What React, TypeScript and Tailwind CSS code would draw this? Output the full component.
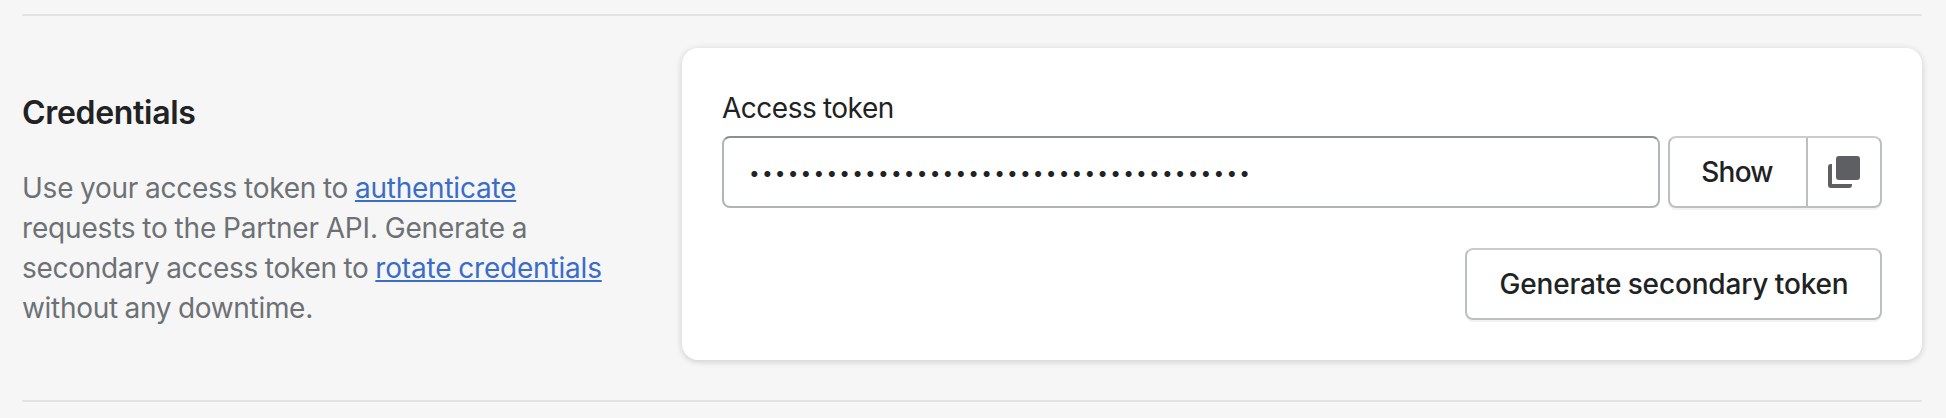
function DuplicateIcon() {
  return (
    <svg width="40" height="40" viewBox="0 0 40 40" fill="#5d5f63" aria-hidden="true">
      <rect x="12" y="4" width="24" height="24" rx="3" />
      <path d="M7 12h1v20h20v1a3 3 0 0 1-3 3H7a3 3 0 0 1-3-3V15a3 3 0 0 1 3-3z" />
    </svg>
  );
}

const token = '•'.repeat(39);

export default function App() {
  return (
    <div className="h-[418px] w-[1946px] bg-[#f6f6f6] pl-[22px] pr-6 pt-3.5 font-[Inter,sans-serif] text-[28px] leading-10 text-[#202223]">
      <section className="flex h-[388px] border-y-2 border-[#e2e3e4] pt-8">
        <div className="w-[660px] shrink-0 pt-[45px]">
          <h2 className="text-[32px] font-semibold tracking-[-0.31px]">Credentials</h2>
          <p className="mt-[35px] whitespace-nowrap text-[#6d7175] [word-spacing:-0.8px]">
            <span className="tracking-[-0.24px]">Use your access token to </span>
            <a href="#" className="tracking-[-0.23px] text-[#3a6dc9] underline decoration-2 underline-offset-2">authenticate</a>
            <br />
            <span className="tracking-[-0.18px]">requests to the Partner API. Generate a</span>
            <br />
            <span className="tracking-[-0.29px]">secondary access token to </span>
            <a href="#" className="tracking-[-0.19px] text-[#3a6dc9] underline decoration-2 underline-offset-2">rotate credentials</a>
            <br />
            <span className="tracking-[-0.31px]">without any downtime.</span>
          </p>
        </div>
        <div className="h-[312px] w-[1240px] rounded-2xl bg-white p-10 shadow-[0_0_8px_rgba(23,24,24,0.06),0_2px_6px_rgba(0,0,0,0.12)]">
          <div className="tracking-[-0.48px] [word-spacing:-0.8px]">Access token</div>
          <div className="mt-2 flex gap-2">
            <div className="flex h-[72px] w-[938px] items-center rounded-lg border-2 border-[#aeb4b9] border-t-[#898f94] pl-[25px] pt-[3px] text-[19px] tracking-[2.215px]">
              {token}
            </div>
            <div className="flex h-[72px] w-[214px] rounded-lg shadow-[0_2px_0_rgba(0,0,0,0.05)]">
              <button className="w-[140px] rounded-l-lg border-2 border-[#babfc3] border-t-[#c9cccf] pr-0.5 font-medium tracking-[-0.8px]">Show</button>
              <button aria-label="Copy" className="flex w-[74px] items-center justify-center rounded-r-lg border-2 border-l-0 border-[#babfc3] border-t-[#c9cccf]">
                <DuplicateIcon />
              </button>
            </div>
          </div>
          <div className="mt-10 flex justify-end">
            <button className="h-[72px] w-[417px] rounded-lg border-2 border-[#babfc3] border-t-[#c9cccf] pl-px font-medium tracking-[-0.16px] shadow-[0_2px_0_rgba(0,0,0,0.05)] [word-spacing:-0.8px]">
              Generate secondary token
            </button>
          </div>
        </div>
      </section>
    </div>
  );
}
